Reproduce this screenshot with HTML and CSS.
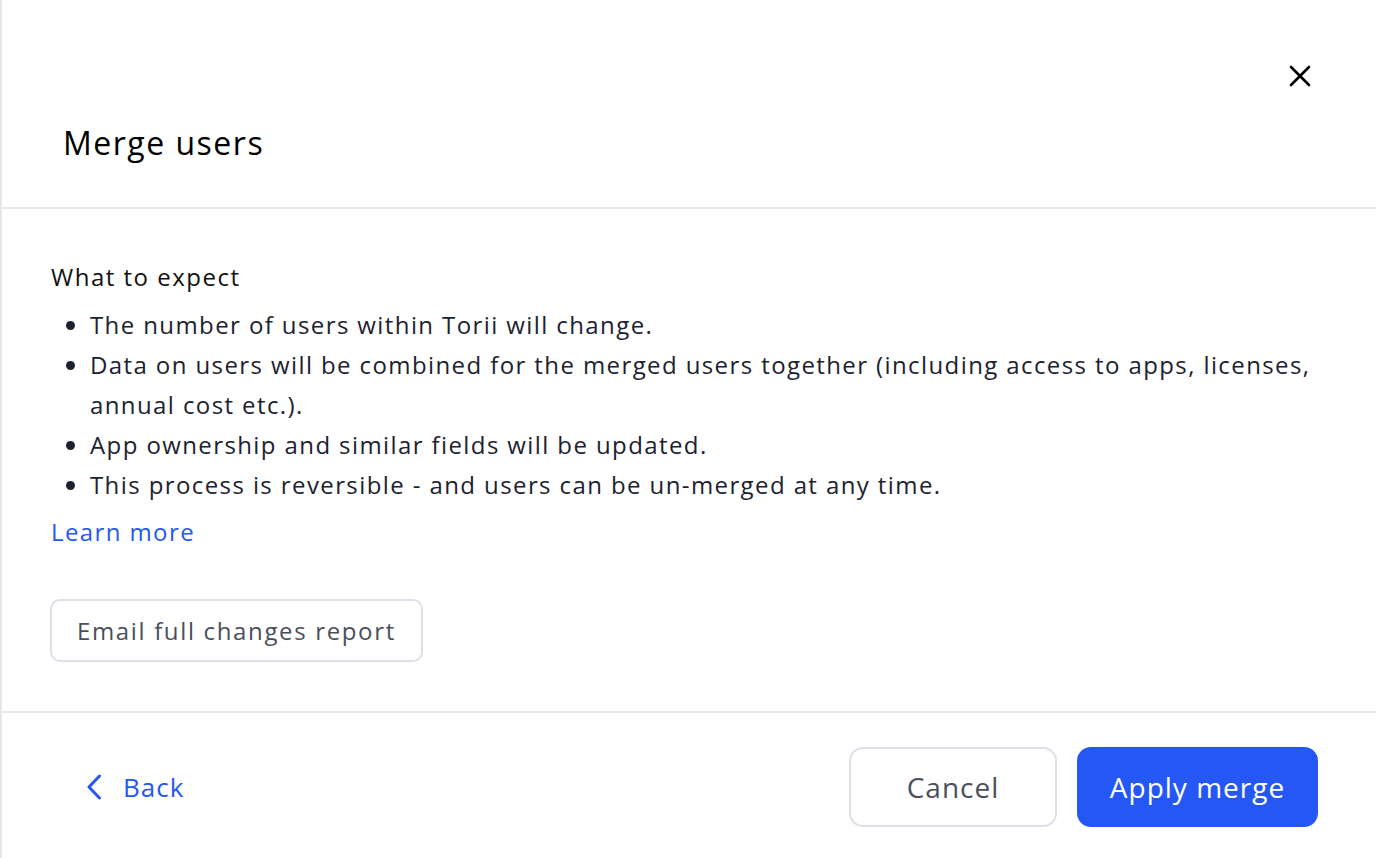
FILE: index.html
```html
<!DOCTYPE html>
<html lang="en">
<head>
    <meta charset="UTF-8">
    <meta name="viewport" content="width=device-width, initial-scale=1.0">
    <title>Merge users</title>
    <link rel="stylesheet" href="styles.css">
</head>
<body>

<div class="modal">
    <!-- Header -->
    <div class="modal-header">
        <button class="close-btn" aria-label="Close">
            <svg width="22" height="22" viewBox="0 0 22 22">
                <path d="M2 2 L20 20 M20 2 L2 20" stroke="#000" stroke-width="2.6" stroke-linecap="round"/>
            </svg>
        </button>
        <h2>Merge users</h2>
    </div>

    <!-- Body -->
    <div class="modal-body">
        <h4>What to expect</h4>
        <ul class="expect-list">
            <li>The number of users within Torii will change.</li>
            <li>Data on users will be combined for the merged users together (including access to apps, licenses, annual cost etc.).</li>
            <li>App ownership and similar fields will be updated.</li>
            <li>This process is reversible - and users can be un-merged at any time.</li>
        </ul>
        <a href="#" class="learn-more">Learn more</a>
        <button class="btn btn-outline btn-report">Email full changes report</button>
    </div>

    <!-- Footer -->
    <div class="modal-footer">
        <a href="#" class="back-link">
            <svg width="16" height="26" viewBox="0 0 16 26">
                <path d="M13.5 2 L3 13 L13.5 24" fill="none" stroke="#2557f5" stroke-width="3" stroke-linecap="round" stroke-linejoin="round"/>
            </svg>
            <span>Back</span>
        </a>
        <div class="footer-actions">
            <button class="btn btn-outline btn-large">Cancel</button>
            <button class="btn btn-primary btn-large">Apply merge</button>
        </div>
    </div>
</div>

</body>
</html>
```

FILE: styles.css
```css
body {
    font-family: "Open Sans", "Noto Sans", sans-serif;
    margin: 0;
    padding: 0;
    background: #ffffff;
    color: #1c2230;
}
.modal {
    height: 858px;
    border-left: 2px solid #e4e6ea;
    box-sizing: border-box;
    display: flex;
    flex-direction: column;
}
.modal-header {
    position: relative;
    height: 209px;
    flex-shrink: 0;
    border-bottom: 2px solid #e6e9f2;
    display: flex;
    align-items: flex-end;
    padding: 0 0 43px 61px;
    box-sizing: border-box;
}
.modal-header h2 {
    margin: 0;
    font-size: 32px;
    font-weight: 500;
    color: #000;
    letter-spacing: 1.5px;
}
.close-btn {
    position: absolute;
    top: 65px;
    right: 65px;
    background: none;
    border: none;
    padding: 0;
    cursor: pointer;
    line-height: 0;
}
.modal-body {
    flex: 1;
    padding: 51px 49px 0;
    font-size: 24px;
    letter-spacing: 1.4px;
}
.modal-body h4 {
    margin: 0 0 11px;
    font-size: 24px;
    font-weight: 500;
    color: #111;
    line-height: 34px;
    letter-spacing: 1.5px;
}
.expect-list {
    margin: 0;
    padding-left: 39px;
    line-height: 40px;
}
.learn-more {
    display: block;
    width: fit-content;
    margin-top: 10px;
    line-height: 34px;
    color: #2557f5;
    text-decoration: none;
}
.btn {
    font-family: inherit;
    border-radius: 10px;
    cursor: pointer;
}
.btn-outline {
    background: #fff;
    border: 2px solid #dce0e8;
    color: #4a4f5b;
}
.btn-report {
    display: block;
    margin-top: 50px;
    margin-left: -1px;
    height: 63px;
    padding: 0 25px;
    font-size: 24px;
    letter-spacing: 1.65px;
}
.modal-footer {
    height: 147px;
    flex-shrink: 0;
    border-top: 2px solid #e6e9f2;
    box-sizing: border-box;
    display: flex;
    align-items: center;
    justify-content: space-between;
    padding: 2px 58px 0 84px;
}
.back-link {
    display: flex;
    align-items: center;
    gap: 21px;
    color: #2557f5;
    text-decoration: none;
    font-size: 26px;
    letter-spacing: 1px;
}
.footer-actions {
    display: flex;
    gap: 20px;
}
.btn-large {
    height: 80px;
    font-size: 28px;
    letter-spacing: 1px;
    border-radius: 14px;
}
.btn-outline.btn-large {
    width: 208px;
}
.btn-primary {
    width: 241px;
    background: #2557f5;
    border: none;
    color: #fff;
}
```
